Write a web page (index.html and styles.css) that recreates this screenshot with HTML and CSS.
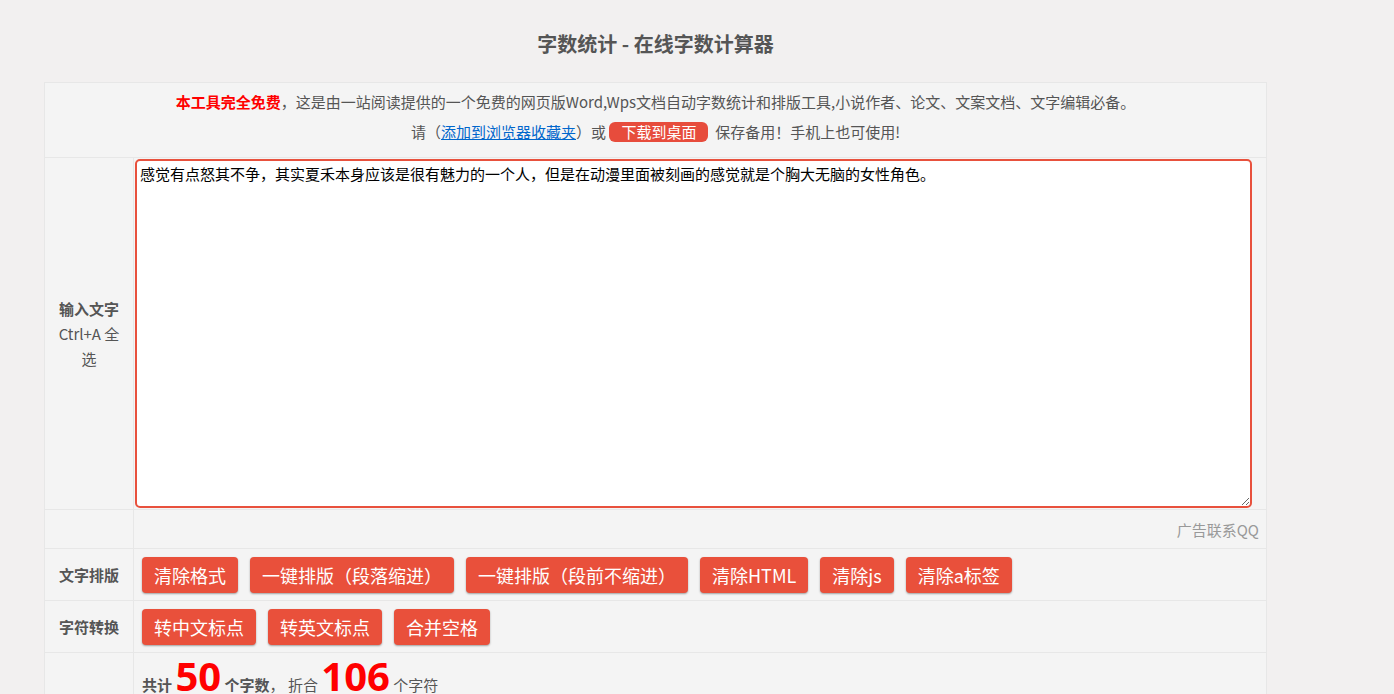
FILE: index.html
```html
<!DOCTYPE html>
<html lang="zh-CN">
<head>
    <meta charset="utf-8">
    <meta name="viewport" content="width=device-width, initial-scale=1">
    <title>字数统计 - 在线字数计算器</title>
    <link rel="stylesheet" href="styles.css">
</head>
<body>
    <div class="wrap">
        <h1 class="title">字数统计 - 在线字数计算器</h1>

        <table class="tool">
            <tr class="row-intro">
                <td colspan="2">
                    <p><span class="free">本工具完全免费</span>，这是由一站阅读提供的一个免费的网页版Word,Wps文档自动字数统计和排版工具,小说作者、论文、文案文档、文字编辑必备。</p>
                    <p>请（<a href="#" class="fav">添加到浏览器收藏夹</a>）或 <a href="#" class="down">下载到桌面</a> &nbsp;保存备用！手机上也可使用!</p>
                </td>
            </tr>
            <tr class="row-input">
                <th><b>输入文字</b><br>Ctrl+A 全选</th>
                <td><textarea id="txt">感觉有点怒其不争，其实夏禾本身应该是很有魅力的一个人，但是在动漫里面被刻画的感觉就是个胸大无脑的女性角色。</textarea></td>
            </tr>
            <tr class="row-ad">
                <th></th>
                <td>广告联系QQ</td>
            </tr>
            <tr class="row-btns">
                <th>文字排版</th>
                <td>
                    <div class="btns">
                        <button>清除格式</button>
                        <button>一键排版（段落缩进）</button>
                        <button>一键排版（段前不缩进）</button>
                        <button>清除HTML</button>
                        <button>清除js</button>
                        <button>清除a标签</button>
                    </div>
                </td>
            </tr>
            <tr class="row-btns">
                <th>字符转换</th>
                <td>
                    <div class="btns">
                        <button>转中文标点</button>
                        <button>转英文标点</button>
                        <button>合并空格</button>
                    </div>
                </td>
            </tr>
            <tr class="row-count">
                <th></th>
                <td><b>共计</b> <span class="num" id="words">50</span> <b>个字数</b>， 折合 <span class="num" id="chars">106</span> 个字符</td>
            </tr>
        </table>
    </div>

    <script>
        // 统计字数：中文字符算一个字，英文单词/数字串算一个字
        function tongji() {
            let t = document.getElementById("txt").value;
            let zh = (t.match(/[\u4e00-\u9fa5\u3000-\u303f\uff00-\uffef]/g) || []).length;
            let en = (t.match(/[A-Za-z0-9]+/g) || []).length;
            let bytes = 0;
            for (let i = 0; i < t.length; i++) {
                bytes += t.charCodeAt(i) > 255 ? 2 : 1;
            }
            document.getElementById("words").textContent = zh + en;
            document.getElementById("chars").textContent = bytes;
        }
        document.getElementById("txt").addEventListener("input", tongji);
    </script>
</body>
</html>
```

FILE: styles.css
```css
body {
    margin: 0;
    background-color: #f2f0f0;
    font-family: "Noto Sans CJK SC", "Liberation Sans", sans-serif;
    font-size: 15px;
    color: #555;
}
.wrap {
    width: 1223px;
    margin-left: 44px;
}
.title {
    margin: 0;
    padding: 30px 0 0;
    height: 52px;
    font-size: 20px;
    line-height: 28px;
    font-weight: bold;
    text-align: center;
    color: #555;
}
.tool {
    width: 100%;
    border-collapse: collapse;
    background: #f4f4f4;
}
.tool th, .tool td {
    border: 1px solid #e7e7e7;
    padding: 0;
}
.tool th {
    width: 68px;
    padding: 0 10px;
    font-size: 15px;
    line-height: 25px;
    font-weight: bold;
    text-align: center;
    vertical-align: middle;
}
.row-input th {
    font-weight: normal;
}

/* 顶部说明 */
.row-intro td {
    height: 70px;
    padding-top: 4px;
    text-align: center;
    vertical-align: top;
}
.row-intro p {
    margin: 0;
    line-height: 30px;
}
.free {
    color: #ff0000;
    font-weight: bold;
}
.fav {
    color: #0066cc;
}
.down {
    display: inline-block;
    background: #e74c3c;
    color: #fff;
    text-decoration: none;
    padding: 0 12px;
    line-height: 20px;
    border-radius: 6px;
}

/* 输入框 */
.row-input td {
    height: 350px;
    padding: 1px 0 0 1px;
    vertical-align: top;
}
textarea {
    display: block;
    box-sizing: border-box;
    width: 1117px;
    height: 349px;
    border: 2px solid #e8513d;
    border-radius: 5px;
    padding: 0 3px;
    font-family: "Noto Sans CJK SC", "Liberation Sans", sans-serif;
    font-size: 15px;
    line-height: 26px;
    color: #000;
    background: #fff;
    outline: none;
}

.row-ad td {
    height: 38px;
    text-align: right;
    padding-right: 7px;
    color: #999;
}

/* 按钮 */
.row-btns td {
    height: 51px;
    padding: 0 8px;
}
.btns {
    display: flex;
    gap: 12px;
}
.btns button {
    height: 36px;
    padding: 0 12px;
    border: none;
    border-radius: 4px;
    background-color: #e9503b;
    color: #fff;
    font-family: "Noto Sans CJK SC", "Liberation Sans", sans-serif;
    font-size: 18px;
    line-height: 36px;
    cursor: pointer;
    box-shadow: 0 1px 2px rgba(0, 0, 0, 0.35);
}
.btns button:hover {
    background-color: #c0392b;
}

.row-count td {
    height: 40px;
    padding: 4px 8px 0;
    vertical-align: top;
    line-height: 38px;
}
.num {
    color: #ff0000;
    font-size: 40px;
    font-weight: bold;
    font-family: "Open Sans", "Liberation Sans", sans-serif;
}
```
